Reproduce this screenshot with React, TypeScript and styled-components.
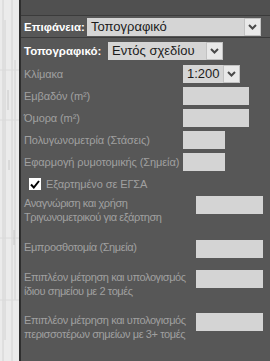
import React from 'react'
import styled, { createGlobalStyle } from 'styled-components'

const Global = createGlobalStyle`
  html, body {
    margin: 0;
    padding: 0;
  }
  body {
    width: 270px;
    height: 361px;
    overflow: hidden;
    font-family: "Liberation Sans", Arial, sans-serif;
  }
`

const Screen = styled.div`
  display: flex;
  width: 270px;
  height: 361px;
`

const Backdrop = styled.div`
  width: 19px;
  background: #ebebeb;
  overflow: hidden;
`

const Divider = styled.div`
  width: 2px;
  background: #2e2e2e;
`

const Panel = styled.div`
  flex: 1;
  background: #575757;
  display: flex;
  flex-direction: column;
`

const TitleBar = styled.div`
  height: 15px;
  background: #505050;
  border-bottom: 1px solid #3b3b3b;
`

const TopRow = styled.div`
  display: flex;
  align-items: center;
  gap: 2px;
  height: 21px;
  padding: 0 0 0 3px;
  border-bottom: 1px solid #3b3b3b;
`

const Strong = styled.span`
  color: #ffffff;
  font-weight: bold;
  font-size: 11.5px;
  white-space: nowrap;
`

const Form = styled.div`
  display: flex;
  flex-direction: column;
  padding: 4px 0 0 3px;
`

const Field = styled.div<{ $label: number; $gap: number; $height?: number }>`
  display: grid;
  grid-template-columns: ${p => p.$label}px auto;
  align-items: ${p => (p.$height ? 'start' : 'center')};
  min-height: ${p => p.$height ?? 18}px;
  margin-bottom: ${p => p.$gap}px;
`

const Label = styled.span<{ $tight?: boolean }>`
  color: #a0a0a0;
  font-size: 11px;
  line-height: 14px;
  letter-spacing: ${p => (p.$tight ? '-0.4px' : '-0.1px')};
  white-space: nowrap;
`

const Select = styled.div<{ $width: number }>`
  display: flex;
  align-items: stretch;
  width: ${p => p.$width}px;
  height: 18px;
  background: #d5d5d5;
  color: #1b1b1b;
  font-size: 13px;
`

const SelectText = styled.span`
  flex: 1;
  padding-left: 4px;
  line-height: 18px;
  white-space: nowrap;
  overflow: hidden;
`

const Arrow = styled.span`
  width: 15px;
  background: #e9e9e9;
  border: 1px solid #c2c2c2;
  display: flex;
  align-items: center;
  justify-content: center;
`

const Input = styled.div<{ $width: number }>`
  width: ${p => p.$width}px;
  height: 18px;
  background: #d4d4d4;
`

const CheckRow = styled.div`
  display: flex;
  align-items: center;
  gap: 5px;
  padding-left: 5px;
  height: 14px;
  margin: 2px 0 5px;
`

const CheckBox = styled.span`
  width: 12px;
  height: 12px;
  background: #ffffff;
  display: flex;
  align-items: center;
  justify-content: center;
`

const Chevron = () => (
  <svg width="9" height="6" viewBox="0 0 9 6">
    <path d="M1 1 L4.5 4.5 L8 1" fill="none" stroke="#4a4a4a" strokeWidth="2" />
  </svg>
)

const Dropdown = ({ width, value }: { width: number; value: string }) => (
  <Select $width={width}>
    <SelectText>{value}</SelectText>
    <Arrow>
      <Chevron />
    </Arrow>
  </Select>
)

const Sketch = () => (
  <svg width="19" height="361" viewBox="0 0 19 361">
    <path d="M3 0 V361 M5 20 V340 M12 0 V361 M15 60 V300" stroke="#d2d2d2" strokeWidth="1" />
    <path d="M0 70 H19 M0 120 H19 M0 238 H19 M0 300 H19" stroke="#dadada" strokeWidth="1" />
    <path d="M8 90 V110 M9 160 V170 M14 230 V245" stroke="#c8c8c8" strokeWidth="1" />
  </svg>
)

const first = [
  { label: 'Εμβαδόν (m²)', width: 66 },
  { label: 'Όμορα (m²)', width: 66 },
  { label: 'Πολυγωνομετρία (Στάσεις)', width: 42 },
  { label: 'Εφαρμογή ρυμοτομικής (Σημεία)', width: 42 },
]

const second = [
  { lines: ['Αναγνώριση και χρήση', 'Τριγωνομετρικού για εξάρτηση'], height: 30, gap: 14 },
  { lines: ['Εμπροσθοτομία (Σημεία)'], height: 18, gap: 12 },
  { lines: ['Επιπλέον μέτρηση και υπολογισμός', 'ίδιου σημείου με 2 τομές'], height: 30, gap: 13 },
  { lines: ['Επιπλέον μέτρηση και υπολογισμός', 'περισσοτέρων σημείων με 3+ τομές'], height: 30, gap: 0 },
]

export default function App() {
  return (
    <Screen>
      <Global />
      <Backdrop>
        <Sketch />
      </Backdrop>
      <Divider />
      <Panel>
        <TitleBar />
        <TopRow>
          <Strong>Επιφάνεια:</Strong>
          <Dropdown width={174} value="Τοπογραφικό" />
        </TopRow>
        <Form>
          <Field $label={84} $gap={5}>
            <Strong>Τοπογραφικό:</Strong>
            <Dropdown width={115} value="Εντός σχεδίου" />
          </Field>
          <Field $label={159} $gap={4}>
            <Label>Κλίμακα</Label>
            <Dropdown width={57} value="1:200" />
          </Field>
          {first.map(f => (
            <Field key={f.label} $label={159} $gap={4}>
              <Label>{f.label}</Label>
              <Input $width={f.width} />
            </Field>
          ))}
          <CheckRow>
            <CheckBox>
              <svg width="10" height="9" viewBox="0 0 10 9">
                <path d="M1 4.5 L3.8 7.5 L9 1" fill="none" stroke="#000" strokeWidth="2" />
              </svg>
            </CheckBox>
            <Label>Εξαρτημένο σε ΕΓΣΑ</Label>
          </CheckRow>
          {second.map(r => (
            <Field key={r.lines.join()} $label={172} $gap={r.gap} $height={r.height}>
              <Label $tight>
                {r.lines.map((l, i) => (
                  <React.Fragment key={i}>
                    {i > 0 && <br />}
                    {l}
                  </React.Fragment>
                ))}
              </Label>
              <Input $width={67} />
            </Field>
          ))}
        </Form>
      </Panel>
    </Screen>
  )
}
